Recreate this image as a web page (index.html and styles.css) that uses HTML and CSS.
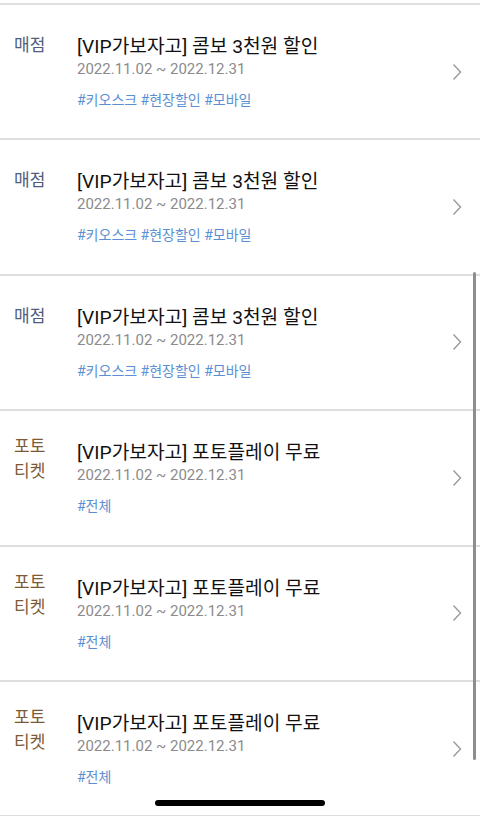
FILE: index.html
```html
<!DOCTYPE html>
<html lang="ko">
<head>
    <meta charset="UTF-8">
    <meta name="viewport" content="width=device-width, initial-scale=1.0">
    <title>이벤트 목록</title>
    <link rel="stylesheet" href="styles.css">
</head>
<body>
    <ul class="event-list">
        <li class="event-item">
            <div class="event-cat cat-snack">매점</div>
            <div class="event-body">
                <div class="event-title">[VIP가보자고] 콤보 3천원 할인</div>
                <div class="event-date">2022.11.02 ~ 2022.12.31</div>
                <div class="event-tags">#키오스크 #현장할인 #모바일</div>
            </div>
            <svg class="chevron" width="10" height="18" viewBox="0 0 10 18"><path d="M1.5 1.5 L8.5 9 L1.5 16.5" fill="none" stroke="#9a9a9a" stroke-width="1.4"/></svg>
        </li>
        <li class="event-item">
            <div class="event-cat cat-snack">매점</div>
            <div class="event-body">
                <div class="event-title">[VIP가보자고] 콤보 3천원 할인</div>
                <div class="event-date">2022.11.02 ~ 2022.12.31</div>
                <div class="event-tags">#키오스크 #현장할인 #모바일</div>
            </div>
            <svg class="chevron" width="10" height="18" viewBox="0 0 10 18"><path d="M1.5 1.5 L8.5 9 L1.5 16.5" fill="none" stroke="#9a9a9a" stroke-width="1.4"/></svg>
        </li>
        <li class="event-item">
            <div class="event-cat cat-snack">매점</div>
            <div class="event-body">
                <div class="event-title">[VIP가보자고] 콤보 3천원 할인</div>
                <div class="event-date">2022.11.02 ~ 2022.12.31</div>
                <div class="event-tags">#키오스크 #현장할인 #모바일</div>
            </div>
            <svg class="chevron" width="10" height="18" viewBox="0 0 10 18"><path d="M1.5 1.5 L8.5 9 L1.5 16.5" fill="none" stroke="#9a9a9a" stroke-width="1.4"/></svg>
        </li>
        <li class="event-item">
            <div class="event-cat cat-photo">포토<br>티켓</div>
            <div class="event-body">
                <div class="event-title">[VIP가보자고] 포토플레이 무료</div>
                <div class="event-date">2022.11.02 ~ 2022.12.31</div>
                <div class="event-tags">#전체</div>
            </div>
            <svg class="chevron" width="10" height="18" viewBox="0 0 10 18"><path d="M1.5 1.5 L8.5 9 L1.5 16.5" fill="none" stroke="#9a9a9a" stroke-width="1.4"/></svg>
        </li>
        <li class="event-item">
            <div class="event-cat cat-photo">포토<br>티켓</div>
            <div class="event-body">
                <div class="event-title">[VIP가보자고] 포토플레이 무료</div>
                <div class="event-date">2022.11.02 ~ 2022.12.31</div>
                <div class="event-tags">#전체</div>
            </div>
            <svg class="chevron" width="10" height="18" viewBox="0 0 10 18"><path d="M1.5 1.5 L8.5 9 L1.5 16.5" fill="none" stroke="#9a9a9a" stroke-width="1.4"/></svg>
        </li>
        <li class="event-item">
            <div class="event-cat cat-photo">포토<br>티켓</div>
            <div class="event-body">
                <div class="event-title">[VIP가보자고] 포토플레이 무료</div>
                <div class="event-date">2022.11.02 ~ 2022.12.31</div>
                <div class="event-tags">#전체</div>
            </div>
            <svg class="chevron" width="10" height="18" viewBox="0 0 10 18"><path d="M1.5 1.5 L8.5 9 L1.5 16.5" fill="none" stroke="#9a9a9a" stroke-width="1.4"/></svg>
        </li>
    </ul>

    <div class="scrollbar"></div>
    <div class="home-indicator"></div>
</body>
</html>
```

FILE: styles.css
```css
body {
    margin: 0;
    background-color: #fff;
    font-family: Roboto, "Noto Sans CJK KR", sans-serif;
    height: 816px;
    overflow: hidden;
    position: relative;
}
.event-list {
    list-style: none;
    margin: 0;
    padding: 3px 0 0;
}
.event-list:before {
    content: "";
    display: block;
    height: 2px;
    background-color: #dedede;
}
.event-item {
    display: flex;
    align-items: flex-start;
    box-sizing: border-box;
    height: 135.4px;
    padding: 28px 18px 0 14px;
    border-bottom: 2px solid #dedede;
}
.event-cat {
    width: 63px;
    flex-shrink: 0;
    font-size: 17px;
    line-height: 24px;
}
.cat-snack {
    color: #4f5d7e;
}
.cat-photo {
    color: #7d5a37;
    line-height: 25px;
    margin-top: -5px;
}
.event-body {
    flex: 1;
    padding-top: 2px;
}
.event-title {
    font-size: 19.2px;
    line-height: 24px;
    color: #111;
}
.event-date {
    font-size: 15px;
    line-height: 20px;
    color: #8b8b8b;
}
.event-tags {
    margin-top: 11px;
    font-size: 14px;
    line-height: 20px;
    color: #5b8fd4;
}
.chevron {
    align-self: center;
    margin-top: -28px;
}
.scrollbar {
    position: absolute;
    left: 473px;
    top: 272px;
    width: 3px;
    height: 488px;
    border-radius: 2px;
    background-color: #8e8e8e;
}
.home-indicator {
    position: absolute;
    left: 155px;
    top: 800px;
    width: 170px;
    height: 6px;
    border-radius: 3px;
    background-color: #000;
}
```
